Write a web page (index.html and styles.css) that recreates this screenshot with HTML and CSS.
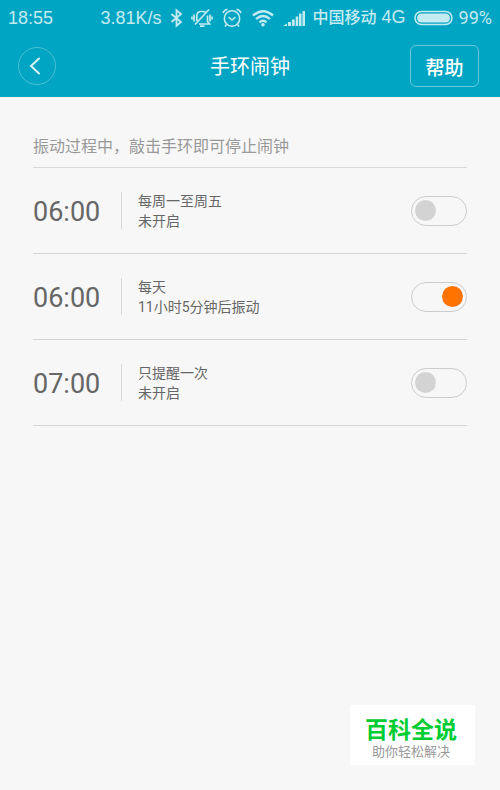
FILE: index.html
```html
<!DOCTYPE html>
<html lang="zh-CN">
<head>
<meta charset="utf-8">
<meta name="viewport" content="width=device-width, initial-scale=1">
<title>手环闹钟</title>
<link rel="stylesheet" href="styles.css">
</head>
<body>
<header class="top">
  <div class="status">
    <span class="clock">18:55</span>
    <span>3.81K/s</span>
    <svg width="13" height="20" viewBox="0 0 13 20" fill="none" stroke="currentColor" stroke-width="1.8"><path d="M1.500 6l9.500 8L6.500 17.800V2.200L11 6l-9.500 8"/></svg>
    <svg width="22" height="20" viewBox="0 0 22 20" fill="none" stroke="currentColor" stroke-width="1.700"><path d="M5.800 13V8Q6 3.500 10 3.500h2q1.500 0 2.500 1M16.500 7.500v6l2 2.500H8M9 18.200h4.500M18 1.500L4 16.500M3 6.500v7M1 8.500v3M19 6.500v7M21 8.500v3"/></svg>
    <svg width="22" height="20" viewBox="-1 0 22 20" fill="none" stroke="currentColor" stroke-width="1.600"><circle cx="10" cy="10.500" r="7.700"/><path d="M6.500 9l3.500 3 3.500-3M1 5q1-3 4.500-3.800M19 5q-1-3-4.500-3.800M4.500 16.500L3 18.500M15.500 16.500l1.500 2"/></svg>
    <svg width="24" height="20" viewBox="0 0 24 20" fill="none" stroke="currentColor" stroke-width="2.300"><path d="M2 7.500q10-8.500 20 0M5 11q7-6 14 0M8.500 14.300q3.500-3 7 0"/><circle cx="12" cy="16.700" r="1.800" fill="currentColor" stroke="none"/></svg>
    <svg width="22" height="20" viewBox="0 0 22 20" fill="currentColor"><path d="M0 18l4-2.500V18zM5 14h3v4H5zM9 11.500h2.700V18H9zM12.700 8.500h2.500V18h-2.500zM16 5.500h2.500V18H16zM19.500 3H22v15h-2.500z"/></svg>
    <span class="carrier"><span class="operator">中国移动</span> 4G</span>
    <span class="power">
      <svg width="39" height="16" viewBox="0 0 39 16"><rect x="1" y="1.500" width="37" height="13" rx="6.500" fill="none" stroke="currentColor" stroke-width="1.500"/><rect x="3" y="3.500" width="33" height="9" rx="4.500" fill="currentColor"/></svg>
      <span class="percent">99%</span>
    </span>
  </div>
  <nav class="bar">
    <button class="back" type="button" aria-label="返回"><svg width="12" height="18" viewBox="0 0 12 18" fill="none" stroke="currentColor" stroke-width="2" stroke-linecap="round"><path d="M10 1.500L2 9l8 7.500"/></svg></button>
    <h1 class="title">手环闹钟</h1>
    <button class="help" type="button">帮助</button>
  </nav>
</header>
<main class="content">
  <p class="hint">振动过程中，敲击手环即可停止闹钟</p>
  <ul class="alarms">
    <li class="alarm">
      <label class="time" for="alarm1">06:00</label>
      <div class="detail"><p>每周一至周五</p><p>未开启</p></div>
      <input class="switch" type="checkbox" id="alarm1">
    </li>
    <li class="alarm">
      <label class="time" for="alarm2">06:00</label>
      <div class="detail"><p>每天</p><p>11小时5分钟后振动</p></div>
      <input class="switch" type="checkbox" id="alarm2" checked>
    </li>
    <li class="alarm">
      <label class="time" for="alarm3">07:00</label>
      <div class="detail"><p>只提醒一次</p><p>未开启</p></div>
      <input class="switch" type="checkbox" id="alarm3">
    </li>
  </ul>
</main>
<aside class="brand">
  <strong class="brand-name">百科全说</strong>
  <span class="brand-line">助你轻松解决</span>
</aside>
</body>
</html>
```
FILE: styles.css
```css
* {
  box-sizing: border-box;
}

body {
  margin: 0;
  min-height: 100vh;
  background: #f7f7f7;
  color: #666;
  font-family: Roboto, "Noto Sans CJK SC", sans-serif;
}

p,
h1,
ul {
  margin: 0;
  padding: 0;
}

svg {
  display: block;
  flex: none;
}

.top {
  background: #00a5c3;
  color: #fff;
}

.status {
  display: flex;
  align-items: center;
  gap: 8px;
  height: 35px;
  padding: 0 8px;
  color: #c4ebf2;
  font-family: "Liberation Sans", "Noto Sans CJK SC", sans-serif;
  font-size: 18px;
  line-height: 36px;
  white-space: nowrap;
}

.clock {
  margin-right: auto;
}

.operator {
  font-size: 16px;
  font-weight: 500;
}

.power {
  display: flex;
  align-items: center;
  gap: 6px;
}

.percent {
  font-family: Roboto, sans-serif;
}

.bar {
  display: grid;
  grid-template-columns: 1fr auto 1fr;
  align-items: center;
  height: 62px;
  padding: 0 18px;
}

.back {
  display: flex;
  align-items: center;
  justify-content: center;
  width: 38px;
  height: 38px;
  padding: 0 4px 0 0;
  border: 1px solid #4dc0d5;
  border-radius: 50%;
  background: none;
  color: #d9f2f6;
}

.title {
  padding-top: 2px;
  font-size: 20px;
  font-weight: 400;
  line-height: 30px;
}

.help {
  justify-self: end;
  width: 69px;
  height: 42px;
  margin-right: 3px;
  padding: 0;
  border: 1px solid #66c9db;
  border-radius: 6px;
  background: none;
  color: #fff;
  font-family: inherit;
  font-size: 19px;
  font-weight: 500;
}

.content {
  padding: 32px 33px 0;
}

.hint {
  height: 39px;
  border-bottom: 1px solid #d8d8d8;
  color: #999;
  font-size: 16px;
  line-height: 36px;
}

.alarms {
  list-style: none;
}

.alarm {
  display: flex;
  align-items: center;
  height: 86px;
  border-bottom: 1px solid #d4d4d4;
}

.time {
  width: 89px;
  padding-top: 3px;
  border-right: 1px solid #d8d8d8;
  font-size: 27px;
  line-height: 34px;
}

.detail {
  flex: 1;
  padding-left: 16px;
  font-size: 14px;
  line-height: 20px;
}

.switch {
  display: flex;
  align-items: center;
  appearance: none;
  width: 56px;
  height: 30px;
  margin: 0;
  padding: 0 3px;
  border: 1px solid #ccc;
  border-radius: 15px;
}

.switch::before {
  content: "";
  width: 21px;
  height: 21px;
  border-radius: 50%;
  background: #d3d3d3;
}

.switch:checked {
  justify-content: flex-end;
}

.switch:checked::before {
  background: #ff7300;
}

.brand {
  position: fixed;
  right: 25px;
  bottom: 25px;
  display: flex;
  flex-direction: column;
  align-items: center;
  width: 125px;
  height: 60px;
  padding: 12px 3px 0 0;
  background: #fff;
}

.brand-name {
  color: #00cc33;
  font-size: 23px;
  font-weight: 700;
  line-height: 27px;
}

.brand-line {
  color: #999;
  font-size: 13px;
  line-height: 16px;
}
```
